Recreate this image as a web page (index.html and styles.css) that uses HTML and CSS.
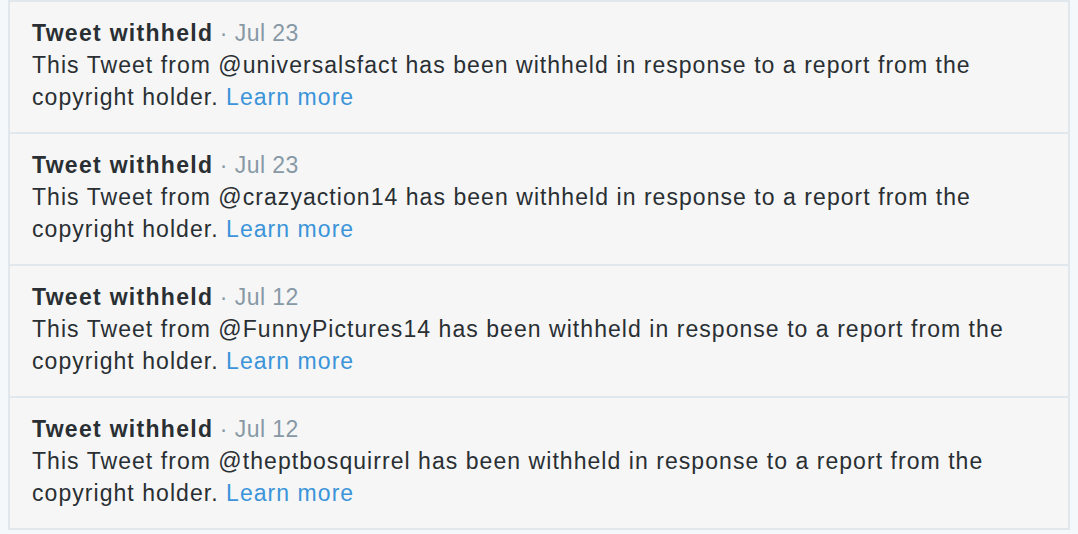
FILE: index.html
```html
<!DOCTYPE html>
<html lang="en">
<head>
<meta charset="utf-8">
<title>Withheld Tweets</title>
<link rel="stylesheet" href="styles.css">
</head>
<body>
  <ol class="stream">
    <li class="tweet">
      <div class="tweet-header"><strong class="title">Tweet withheld</strong> <span class="time">&middot; Jul 23</span></div>
      <p class="tweet-text">This Tweet from @universalsfact has been withheld in response to a report from the copyright holder. <a href="#">Learn more</a></p>
    </li>
    <li class="tweet">
      <div class="tweet-header"><strong class="title">Tweet withheld</strong> <span class="time">&middot; Jul 23</span></div>
      <p class="tweet-text">This Tweet from @crazyaction14 has been withheld in response to a report from the copyright holder. <a href="#">Learn more</a></p>
    </li>
    <li class="tweet">
      <div class="tweet-header"><strong class="title">Tweet withheld</strong> <span class="time">&middot; Jul 12</span></div>
      <p class="tweet-text">This Tweet from @FunnyPictures14 has been withheld in response to a report from the copyright holder. <a href="#">Learn more</a></p>
    </li>
    <li class="tweet">
      <div class="tweet-header"><strong class="title">Tweet withheld</strong> <span class="time">&middot; Jul 12</span></div>
      <p class="tweet-text">This Tweet from @theptbosquirrel has been withheld in response to a report from the copyright holder. <a href="#">Learn more</a></p>
    </li>
  </ol>
</body>
</html>
```

FILE: styles.css
```css
body {
  margin: 0;
  padding: 0 8px 0 8px;
  background-color: #f5f8fa;
  font-family: "Liberation Sans", Arial, sans-serif;
  font-size: 23px;
  color: #292f33;
}
.stream {
  list-style: none;
  margin: 0;
  padding: 0;
  width: 1058px;
  border: 2px solid #e1e8ed;
  background-color: #f6f6f6;
}
.tweet {
  padding: 15px 22px 19px 22px;
  height: 96px;
  line-height: 32px;
}
.tweet + .tweet {
  border-top: 2px solid #e1e8ed;
}
.title {
  font-weight: bold;
  letter-spacing: 1.3px;
}
.time {
  color: #8899a6;
  letter-spacing: 0.45px;
}
.tweet-text {
  margin: 0;
  width: 1000px;
  letter-spacing: 1.05px;
}
a[href] {
  color: #3b94d9;
  text-decoration: none;
}
```
